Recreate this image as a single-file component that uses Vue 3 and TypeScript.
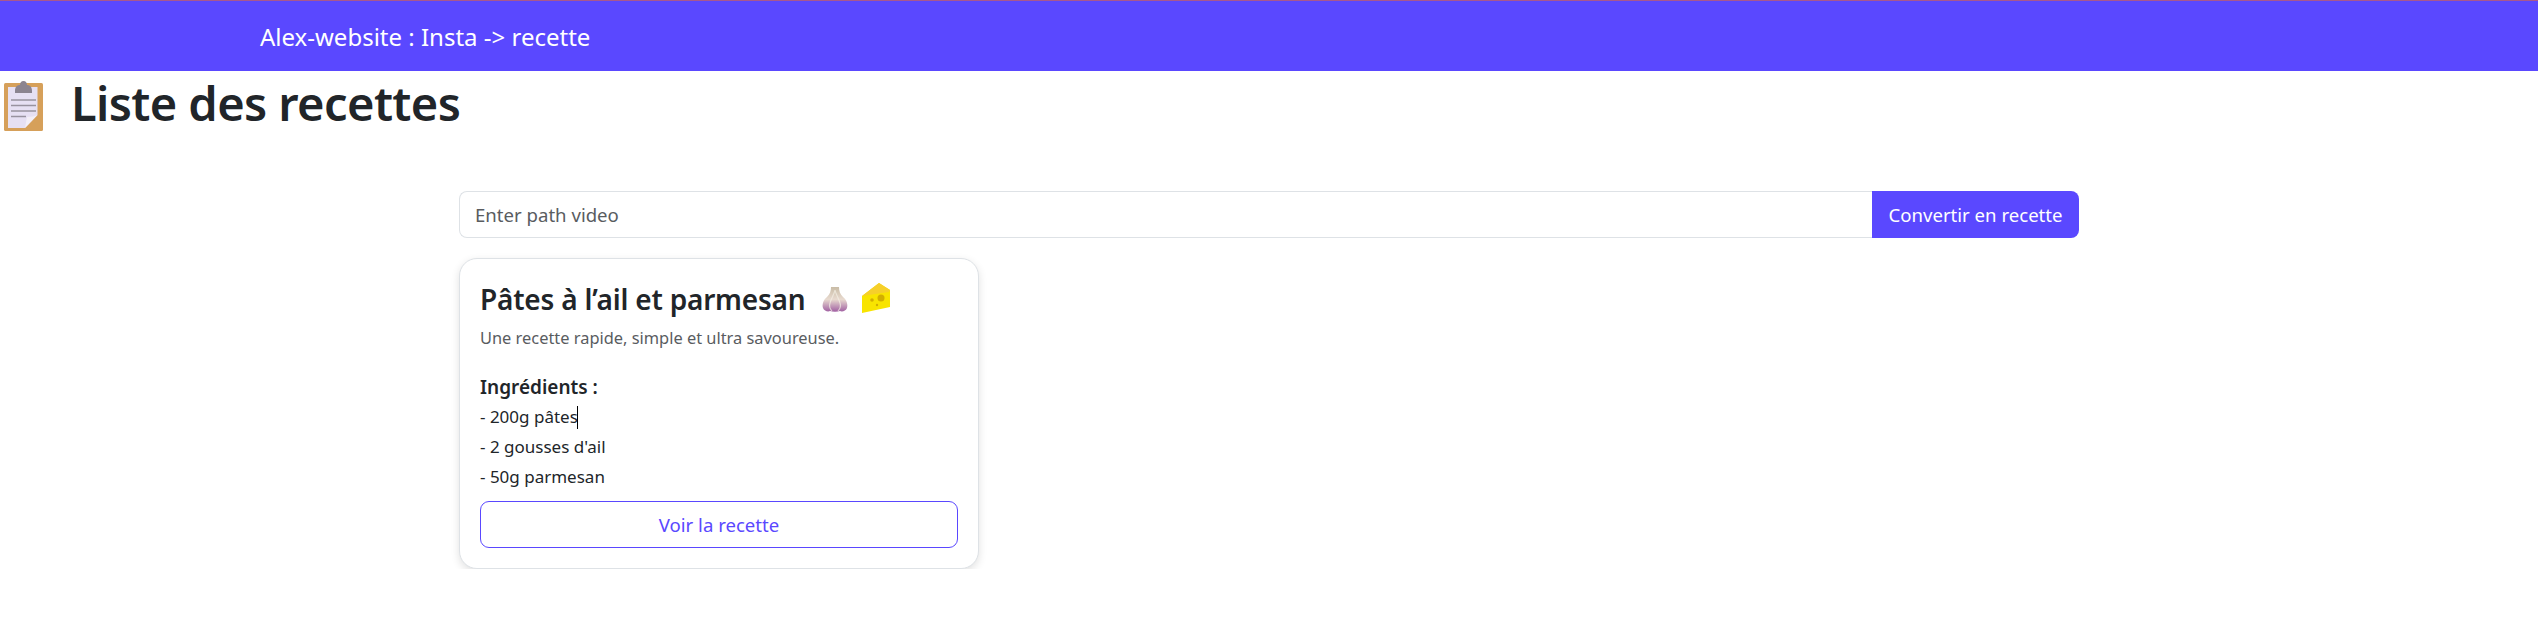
<script setup lang="ts">
const ingredients = ['- 200g pâtes', "- 2 gousses d'ail", '- 50g parmesan']
</script>

<template>
  <header class="navbar">
    <span class="brand">Alex-website : Insta -&gt; recette</span>
  </header>

  <h1 class="page-title">
    <svg class="clipboard" viewBox="0 0 39 50" aria-hidden="true">
      <rect x="0" y="2" width="39" height="48" rx="1.5" fill="#d6a05a" />
      <path d="M4 6h29.500v28L21 47H4z" fill="#e6e0f3" />
      <path d="M21 47l2-11c4 0 8-1 10.500-2z" fill="#f3eff7" />
      <path d="M16 4c0-2 1-4 3.500-4S23 2 23 4c3 0 5 2 5 6v2H11v-2c0-4 2-6 5-6z" fill="#8b8490" />
      <path d="M7 19h25M7 24.500h25M7 30h25M7 35.500h15" stroke="#98929f" stroke-width="1.700" />
    </svg>
    <span>Liste des recettes</span>
  </h1>

  <main class="content">
    <form class="convert" @submit.prevent>
      <input class="convert__input" type="text" placeholder="Enter path video" />
      <button class="convert__button" type="submit">Convertir en recette</button>
    </form>

    <article class="card">
      <h2 class="card__title">
        <span>Pâtes à l’ail et parmesan</span>
        <svg class="emoji emoji--garlic" viewBox="0 0 26 25" aria-hidden="true">
          <defs>
            <linearGradient id="garlic" x1="0" y1="0" x2="0" y2="1">
              <stop offset="0" stop-color="#c9bca6" />
              <stop offset="0.5" stop-color="#e8dacf" />
              <stop offset="1" stop-color="#a05fa2" />
            </linearGradient>
          </defs>
          <path d="M9 0h8c0 4 1 7 4 10 4 3 5 8 4 11-1 3-5 4-7 3-3 1-7 1-10 0-2 1-6 0-7-3-1-3 0-8 4-11 3-3 4-6 4-10z" fill="url(#garlic)" />
          <path d="M13 3c-1 5-4 9-5 13-1 3 0 6 2 8M13 3c1 5 4 9 5 13 1 3 0 6-2 8" fill="none" stroke="#f4efe6" stroke-width="1.200" opacity="0.7" />
        </svg>
        <svg class="emoji emoji--cheese" viewBox="0 0 28 30" aria-hidden="true">
          <path d="M0 13L17 0l11 7v17L0 30z" fill="#f8e400" />
          <path d="M0 13L17 0l11 7-1 2z" fill="#f6cf2a" />
          <circle cx="19" cy="15" r="3.500" fill="#d2ae00" />
          <circle cx="10" cy="17" r="1.800" fill="#d2ae00" />
          <circle cx="15" cy="22" r="1.200" fill="#d2ae00" />
        </svg>
      </h2>
      <p class="card__desc">Une recette rapide, simple et ultra savoureuse.</p>
      <strong class="card__label">Ingrédients :</strong>
      <ul class="card__list">
        <li v-for="(item, index) in ingredients" :key="item">
          {{ item }}<span v-if="index === 0" class="caret"></span>
        </li>
      </ul>
      <button class="card__button" type="button">Voir la recette</button>
    </article>
  </main>
</template>

<style>
body {
  background: #fff;
}
</style>

<style scoped>
.navbar {
  box-sizing: border-box;
  display: flex;
  align-items: center;
  height: 71px;
  border-top: 1px solid #a8588c;
  background: #5a48ff;
  padding-left: 260px;
}

.brand {
  color: #fff;
  font-family: "Noto Sans", sans-serif;
  font-size: 24px;
}

.page-title {
  display: flex;
  align-items: center;
  gap: 28px;
  height: 64px;
  margin: 0;
  padding-left: 4px;
  color: #212529;
  font-family: "Noto Sans", sans-serif;
  font-size: 47px;
  font-weight: 600;
  letter-spacing: -0.6px;
}

.clipboard {
  flex: none;
  width: 39px;
  height: 50px;
  margin-top: 6px;
}

.content {
  width: 1620px;
  margin: 56px 0 0 459px;
}

.convert {
  display: flex;
  height: 47px;
}

.convert__input {
  flex: 1;
  box-sizing: border-box;
  border: 1px solid #dee2e6;
  border-right: 0;
  border-radius: 8px 0 0 8px;
  padding: 0 15px;
  color: #212529;
  font-family: "Noto Sans", sans-serif;
  font-size: 18.600px;
  outline: none;
}

.convert__input::placeholder {
  color: #595c5f;
  opacity: 1;
}

.convert__button {
  width: 207px;
  border: 0;
  border-radius: 0 8px 8px 0;
  background: #5a48ff;
  color: #fff;
  font-family: "Noto Sans", sans-serif;
  font-size: 18.600px;
}

.card {
  box-sizing: border-box;
  width: 520px;
  height: 311px;
  margin-top: 20px;
  border: 1px solid #dee2e6;
  border-radius: 18px;
  background: #fff;
  padding: 20px 20px 0;
  color: #212529;
  font-family: "Noto Sans", sans-serif;
  box-shadow: 0 3px 8px rgb(0 0 0 / 12%);
}

.card__title {
  display: flex;
  align-items: center;
  height: 40px;
  margin: 0;
  font-size: 28px;
  font-weight: 600;
  letter-spacing: -0.2px;
}

.emoji {
  flex: none;
}

.emoji--garlic {
  width: 26px;
  height: 25px;
  margin-left: 17px;
}

.emoji--cheese {
  width: 28px;
  height: 30px;
  margin: -3px 0 0 14px;
}

.card__desc {
  margin: 7px 0 0;
  color: #595c5f;
  font-size: 16.400px;
  line-height: 24px;
}

.card__label {
  display: block;
  margin-top: 22px;
  font-size: 19px;
  font-weight: 600;
  line-height: 30px;
}

.card__list {
  margin: 0;
  padding: 0;
  list-style: none;
  font-size: 17px;
  line-height: 30px;
}

.caret {
  display: inline-block;
  width: 1px;
  height: 23px;
  margin-left: -1px;
  background: #000;
  vertical-align: -6px;
}

.card__button {
  display: block;
  width: 478px;
  height: 47px;
  margin-top: 9px;
  border: 1px solid #5a48ff;
  border-radius: 9px;
  background: #fff;
  color: #5a48ff;
  font-family: "Noto Sans", sans-serif;
  font-size: 18.600px;
}
</style>
